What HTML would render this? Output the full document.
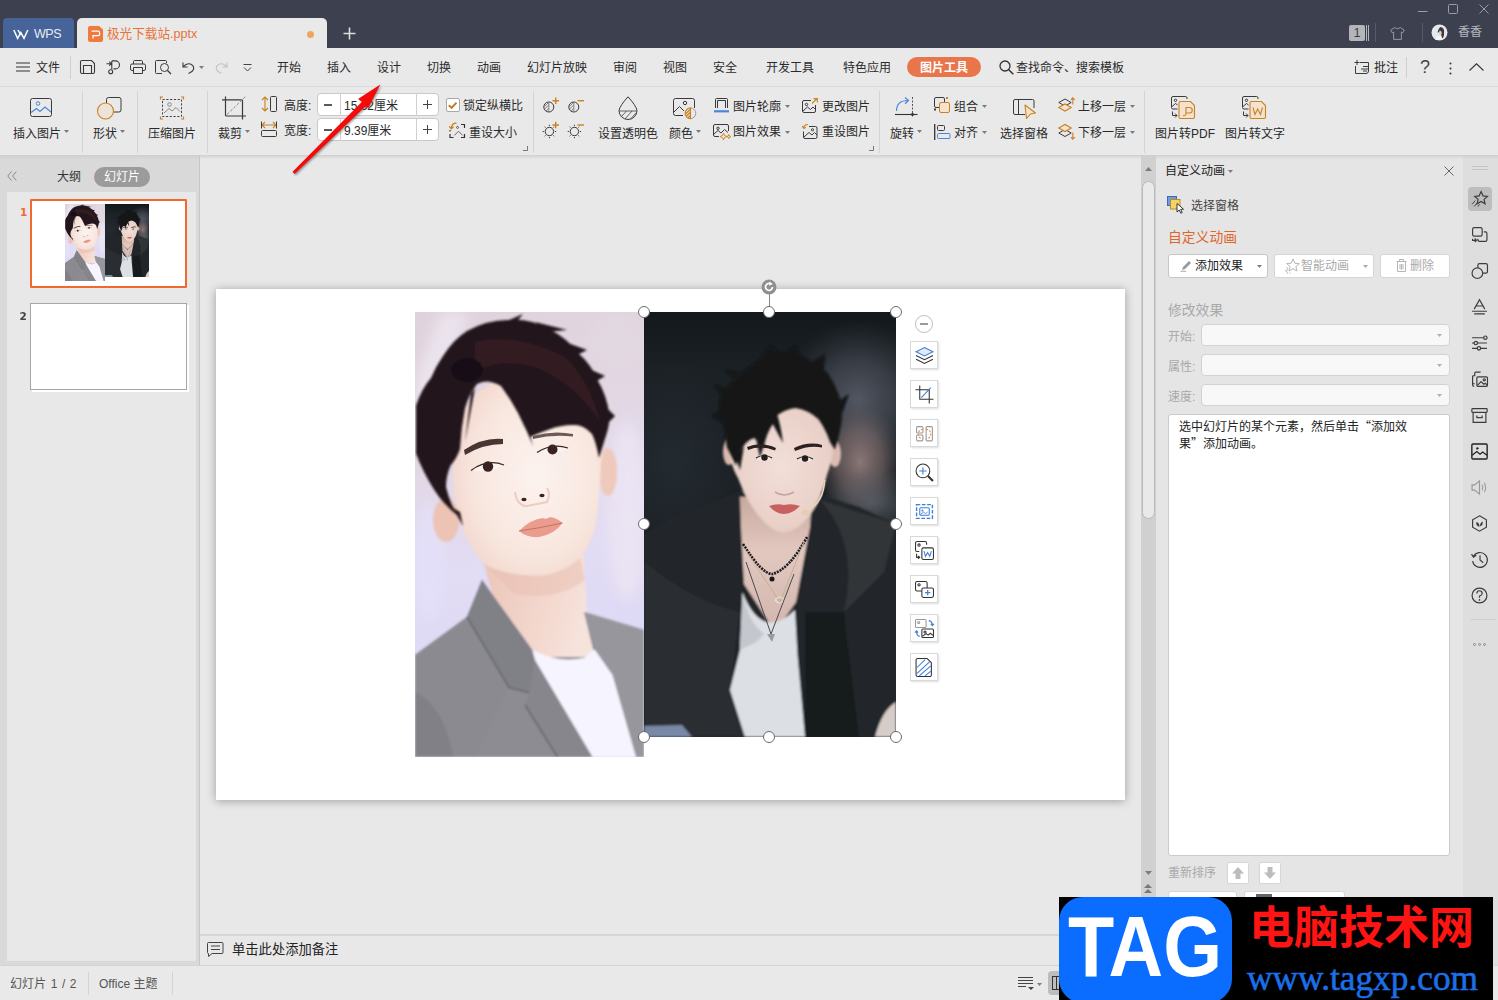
<!DOCTYPE html>
<html lang="zh-CN">
<head>
<meta charset="utf-8">
<title>极光下载站.pptx - WPS</title>
<style>
*{box-sizing:border-box;margin:0;padding:0}
html,body{width:1498px;height:1000px;overflow:hidden;background:#e8e8e8}
body{position:relative;font-family:"Liberation Sans","Noto Sans CJK SC",sans-serif;font-size:12px;color:#2b2b2b;line-height:1}
.abs{position:absolute}
.t{position:absolute;white-space:nowrap;line-height:16px;height:16px}
svg{position:absolute;overflow:visible}
svg.ph{overflow:hidden}
/* title bar */
#title{left:0;top:0;width:1498px;height:48px;background:#3d414f}
#wpstab{left:3px;top:18px;width:71px;height:30px;background:#46649a;border-radius:4px 4px 0 0}
#doctab{left:77px;top:18px;width:250px;height:31px;background:#e9e9e9;border-radius:5px 5px 0 0}
/* menubar */
#menu{left:0;top:48px;width:1498px;height:39px;background:#e9e9e9;border-bottom:1px solid #dcdcdc}
#menu .t{top:12px;font-size:12px;color:#2a2a2a}
/* ribbon */
#ribbon{left:0;top:87px;width:1498px;height:68px;background:#e9e9e9}
#rshadow{left:0;top:155px;width:1498px;height:4px;background:linear-gradient(#cfcfcf,rgba(215,215,215,0));z-index:3}
#ribbon .t{font-size:12px;color:#2a2a2a}
.vsep{position:absolute;width:1px;background:#d4d4d4}
.dd{position:absolute;width:5px;height:3px;background:#7c7c7c;clip-path:polygon(0 0,100% 0,50% 100%)}
/* left */
#left{left:0;top:155px;width:200px;height:811px;background:#d9d9d9;border-right:1px solid #c6c6c6}
#thumbs{left:7px;top:37px;width:189px;height:769px;background:#e8e8e8}
/* canvas */
#canvas{left:200px;top:155px;width:941px;height:780px;background:#e8e8e8}
#slide{left:216px;top:289px;width:909px;height:511px;background:#fff;box-shadow:0 1px 9px rgba(0,0,0,.32)}
/* right */
#vscroll{left:1141px;top:155px;width:15px;height:745px;background:#d0d0d0}
#rpane{left:1156px;top:155px;width:307px;height:745px;background:#e5e5e5}
#rstrip{left:1463px;top:155px;width:35px;height:845px;background:#dedede}
#notes{left:200px;top:934px;width:941px;height:32px;background:#e8e8e8;border-top:2px solid #d6d6d6}
#status{left:0;top:965px;width:1498px;height:35px;background:#e9e9e9;border-top:1px solid #d4d4d4}
</style>
</head>
<body>
<!-- TITLE -->
<div id="title" class="abs"></div>
<div id="wpstab" class="abs"></div>
<svg style="left:13px;top:29px" width="16" height="11" viewBox="0 0 16 11"><path d="M0.8 1 L4.6 9.4 L7.8 3.6 L11 9.400 L14.8 1 M5 1 L7.8 6" fill="none" stroke="#fff" stroke-width="1.5" stroke-linejoin="miter"/></svg>
<div class="t" style="left:34px;top:26px;color:#e6ebf5;font-size:12.500px;letter-spacing:-.5px">WPS</div>
<div id="doctab" class="abs"></div>
<svg style="left:88px;top:26px" width="15" height="16" viewBox="0 0 15 16"><path d="M2 0 H11 L15 3.5 V14 a2 2 0 0 1 -2 2 H2 a2 2 0 0 1 -2 -2 V2 a2 2 0 0 1 2 -2z" fill="#f07a3c"/><path d="M3.6 5.2 H10 a1.600 1.600 0 0 1 1.600 1.600 V8 a1.600 1.600 0 0 1 -1.600 1.600 H5 V12.500" fill="none" stroke="#fff" stroke-width="1.200"/></svg>
<div class="t" style="left:107px;top:26px;color:#e8733a;font-size:12.6px">极光下载站.pptx</div>
<div class="abs" style="left:307px;top:31px;width:7px;height:7px;border-radius:50%;background:#f2a45c"></div>
<svg style="left:343px;top:27px" width="13" height="13" viewBox="0 0 13 13"><path d="M6.5 0.5 V12.5 M0.5 6.5 H12.5" stroke="#dcdcdc" stroke-width="1.6" fill="none"/></svg>
<!-- window ctrls -->
<svg style="left:1418px;top:4px" width="72" height="10" viewBox="0 0 72 10"><path d="M0 7.5 H9.5" stroke="#9a9ca6" stroke-width="1" fill="none"/><rect x="30.5" y="0.5" width="9" height="9" rx="1" fill="none" stroke="#9a9ca6"/><path d="M61.5 0.5 L70.5 9.5 M70.5 0.5 L61.5 9.5" stroke="#9a9ca6" stroke-width="1" fill="none"/></svg>
<div class="abs" style="left:1349px;top:25px;width:16px;height:16px;background:#b4b5ba;border-radius:2px;color:#3a3a3a;font-size:12px;line-height:16px;text-align:center">1</div>
<div class="abs" style="left:1366px;top:25px;width:1px;height:16px;background:#b4b5ba"></div>
<div class="abs" style="left:1368px;top:25px;width:1px;height:16px;background:#b4b5ba"></div>
<div class="abs" style="left:1375px;top:23px;width:1px;height:19px;background:#555968"></div>
<svg style="left:1390px;top:27px" width="15" height="13" viewBox="0 0 15 13"><path d="M4.5 0.6 L0.7 3.2 L2.2 5.8 L3.6 5 V12.4 H11.4 V5 L12.8 5.8 L14.3 3.2 L10.5 0.6 Q7.5 3 4.5 0.6z" fill="none" stroke="#9697a0" stroke-width="1"/></svg>
<div class="abs" style="left:1422px;top:23px;width:1px;height:19px;background:#555968"></div>
<svg style="left:1431px;top:24px" width="17" height="17" viewBox="0 0 17 17"><circle cx="8.500" cy="8.500" r="8" fill="#e3e9ec"/><path d="M9.500 3 q3.800 .5 3.600 4.500 q.2 3 -.8 6 l-2 1.500 q.5 -4 -1 -6 q-1.200 -1 -2.800 -.5 q1 -4.500 3 -5.500z" fill="#3f3838"/><path d="M8.500 6.500 q1.800 0 2.200 2 q.2 1.800 -.8 2.700 q-1.600 -.2 -2 -2 z" fill="#e8cbbb"/><path d="M4 16 q1 -4 4.500 -4.500 l2 1 l1 3 z" fill="#f4f6f7"/></svg>
<div class="t" style="left:1458px;top:24px;color:#b6b7bd;font-size:12px">香香</div>
<!-- MENU -->
<div id="menu" class="abs">
<svg style="left:16px;top:14px" width="14" height="10" viewBox="0 0 14 10"><path d="M0 1 H14 M0 5 H14 M0 9 H14" stroke="#333" stroke-width="1.1" fill="none"/></svg>
<div class="t" style="left:36px">文件</div>
<div class="vsep" style="left:70px;top:8px;height:23px;background:#cfcfcf"></div>
<svg style="left:80px;top:12px" width="15" height="14" viewBox="0 0 15 14"><path d="M0.500 2 a1.500 1.500 0 0 1 1.500 -1.500 H11.500 L14.500 3.500 V12 a1.500 1.500 0 0 1 -1.500 1.500 H2 a1.500 1.500 0 0 1 -1.500 -1.500z M3.500 13.500 V5.500 H11.500 V13.500" fill="none" stroke="#3a3a3a" stroke-width="1.100"/></svg>
<svg style="left:106px;top:12px" width="15" height="15" viewBox="0 0 15 15"><path d="M0.500 3.700 H5 M3.300 1.700 L5.300 3.700 L3.300 5.700 M5.800 0.900 V9.500 M5.800 0.900 H9.500 a4 4 0 0 1 0 8 H7.500" fill="none" stroke="#3a3a3a" stroke-width="1.100"/><circle cx="4.700" cy="11.700" r="2" fill="none" stroke="#3a3a3a" stroke-width="1.100"/></svg>
<svg style="left:130px;top:12px" width="16" height="14" viewBox="0 0 16 14"><path d="M3.500 4 V1.500 a1 1 0 0 1 1 -1 H11.500 a1 1 0 0 1 1 1 V4 M3.500 10.500 H2 a1.500 1.500 0 0 1 -1.500 -1.500 V5.500 a1.500 1.500 0 0 1 1.500 -1.500 H14 a1.500 1.500 0 0 1 1.500 1.500 V9 a1.500 1.500 0 0 1 -1.500 1.500 H12.500 M3.500 7.500 H12.500 V13.500 H3.500z" fill="none" stroke="#3a3a3a" stroke-width="1"/></svg>
<svg style="left:155px;top:12px" width="17" height="15" viewBox="0 0 17 15"><path d="M7 13.500 H1.500 a1 1 0 0 1 -1 -1 V1.500 a1 1 0 0 1 1 -1 H10.500 a1 1 0 0 1 1 1 V3" fill="none" stroke="#3a3a3a"/><circle cx="9.500" cy="7.500" r="4" fill="none" stroke="#3a3a3a"/><path d="M12.500 10.500 L16 14" stroke="#3a3a3a" stroke-width="1.200"/></svg>
<svg style="left:182px;top:14px" width="13" height="12" viewBox="0 0 13 12"><path d="M1 0.500 V5 H5.500 M1.500 4.500 Q4.500 0.800 8.500 2 Q12.500 3.800 11.500 7.500 Q10.500 10 6.500 11.500" fill="none" stroke="#3a3a3a" stroke-width="1.100"/></svg>
<div class="dd" style="left:199px;top:18px"></div>
<svg style="left:215px;top:14px" width="13" height="12" viewBox="0 0 13 12"><path d="M12 0.500 V5 H7.500 M11.500 4.500 Q8.500 0.800 4.500 2 Q0.500 3.800 1.500 7.500 Q2.500 10 6.500 11.500" fill="none" stroke="#c2c2c2" stroke-width="1.100"/></svg>
<svg style="left:243px;top:16px" width="9" height="8" viewBox="0 0 9 8"><path d="M0.500 0.500 H8.500 M1 3.500 L4.500 7 L8 3.500" fill="none" stroke="#444" stroke-width="1"/></svg>
<div class="t" style="left:277px">开始</div>
<div class="t" style="left:327px">插入</div>
<div class="t" style="left:377px">设计</div>
<div class="t" style="left:427px">切换</div>
<div class="t" style="left:477px">动画</div>
<div class="t" style="left:527px">幻灯片放映</div>
<div class="t" style="left:613px">审阅</div>
<div class="t" style="left:663px">视图</div>
<div class="t" style="left:713px">安全</div>
<div class="t" style="left:766px">开发工具</div>
<div class="t" style="left:843px">特色应用</div>
<div class="abs" style="left:907px;top:9px;width:74px;height:20px;border-radius:10px;background:#e9764b"></div>
<div class="t" style="left:920px;color:#fff;font-weight:bold">图片工具</div>
<svg style="left:999px;top:12px" width="15" height="15" viewBox="0 0 15 15"><circle cx="6" cy="6" r="5" fill="none" stroke="#333" stroke-width="1.300"/><path d="M9.800 9.800 L14.300 14.300" stroke="#333" stroke-width="1.500"/></svg>
<div class="t" style="left:1016px">查找命令、搜索模板</div>
<svg style="left:1354px;top:12px" width="16" height="14" viewBox="0 0 16 14"><path d="M6 2.500 H14.500 V11 Q14.500 13.500 12 13.500 H1.500 V6 M9 6.500 H14 M7 9 H14 M9 11 H13" fill="none" stroke="#3a3a3a" stroke-width="1"/><path d="M3 0 V5 M0.500 2.500 H5.500" stroke="#3a3a3a" stroke-width="1" fill="none"/></svg>
<div class="t" style="left:1374px">批注</div>
<div class="vsep" style="left:1406px;top:9px;height:21px;background:#cfcfcf"></div>
<div class="t" style="left:1420px;top:9px;font-size:18px;height:20px;line-height:20px;color:#444">?</div>
<svg style="left:1449px;top:14px" width="3" height="13" viewBox="0 0 3 13"><circle cx="1.500" cy="1.500" r="1" fill="#333"/><circle cx="1.500" cy="6.500" r="1" fill="#333"/><circle cx="1.500" cy="11.500" r="1" fill="#333"/></svg>
<svg style="left:1469px;top:15px" width="15" height="8" viewBox="0 0 15 8"><path d="M0.500 7.500 L7.500 0.800 L14.500 7.500" fill="none" stroke="#333" stroke-width="1.100"/></svg>
</div>
<!-- RIBBON -->
<div id="ribbon" class="abs">
<svg style="left:30px;top:11px" width="22" height="19" viewBox="0 0 22 19"><rect x="0.500" y="0.500" width="21" height="18" rx="2" stroke="#3a3a3a" fill="none" stroke-width="1"/><circle cx="8" cy="5.500" r="1.800" fill="none" stroke="#4a86d8"/><path d="M1 14.500 L6.500 10.500 L10 13.500 L15 9 L21 14" fill="none" stroke="#4a86d8" stroke-width="1.100"/></svg>
<div class="t" style="left:13px;top:39px;">插入图片</div>
<div class="dd" style="left:64px;top:43px"></div>
<div class="vsep" style="left:82px;top:4px;height:62px"></div>
<svg style="left:97px;top:10px" width="25" height="23" viewBox="0 0 25 23"><rect x="9.500" y="0.500" width="14.500" height="14.500" rx="2" stroke="#3a3a3a" fill="none" stroke-width="1" fill="#e9e9e9"/><circle cx="8.500" cy="14" r="8" fill="#ede3d8" stroke="#cb8120" stroke-width="1.100"/></svg>
<div class="t" style="left:93px;top:39px;">形状</div>
<div class="dd" style="left:120px;top:43px"></div>
<div class="vsep" style="left:137px;top:4px;height:62px"></div>
<svg style="left:160px;top:9px" width="24" height="23" viewBox="0 0 24 23"><rect x="2.500" y="3.500" width="19" height="17" fill="none" stroke="#444" stroke-dasharray="2.200 1.600"/><circle cx="9.500" cy="8.500" r="1.800" fill="none" stroke="#888"/><path d="M4 17 L9 12.500 L12 15 L16 11.500 L20 15.500" fill="none" stroke="#888"/><path d="M0.500 3.500 V1 H3 M21 1 H23.500 V3.500 M23.500 20.500 V23 H21 M3 23 H0.500 V20.500" fill="none" stroke="#cb8120" stroke-width="1.200"/></svg>
<div class="t" style="left:148px;top:39px;">压缩图片</div>
<div class="vsep" style="left:207px;top:4px;height:62px"></div>
<svg style="left:222px;top:9px" width="25" height="24" viewBox="0 0 25 24"><path d="M3.500 0.400 V19 a1 1 0 0 0 1 1 H24 M0 3.800 H19.500 a1 1 0 0 1 1 1 V23.600" stroke="#3a3a3a" fill="none" stroke-width="1.200"/><path d="M5 18.500 L24 0" stroke="#8a8a8a" stroke-dasharray="3 1.500" fill="none"/></svg>
<div class="t" style="left:218px;top:39px;">裁剪</div>
<div class="dd" style="left:245px;top:43px"></div>
<svg style="left:261px;top:9px" width="17" height="16" viewBox="0 0 17 16"><rect x="9.500" y="0.500" width="6" height="15" rx="1" stroke="#3a3a3a" fill="none" stroke-width="1"/><path d="M4 1 V15 M1 4 L4 1 L7 4 M1 12 L4 15 L7 12" fill="none" stroke="#cb8120" stroke-width="1.100"/></svg>
<svg style="left:261px;top:34px" width="17" height="17" viewBox="0 0 17 17"><rect x="0.500" y="9.500" width="15" height="6" rx="1" stroke="#3a3a3a" fill="none" stroke-width="1"/><path d="M1 4 H15 M4 1 L1 4 L4 7 M12 1 L15 4 L12 7" fill="none" stroke="#cb8120" stroke-width="1.100"/><path d="M0.500 0.500 V7.500 M15.500 0.500 V7.500" stroke="#3a3a3a" fill="none"/></svg>
<div class="t" style="left:284px;top:11px;">高度:</div>
<div class="t" style="left:284px;top:36px;">宽度:</div>
<div class="abs" style="left:317px;top:6px;width:122px;height:23px;background:#fff;border:1px solid #c9c9c9;border-radius:4px"></div>
<div class="abs" style="left:340px;top:6px;width:1px;height:23px;background:#d0d0d0"></div><div class="abs" style="left:416px;top:6px;width:1px;height:23px;background:#d0d0d0"></div>
<div class="abs" style="left:324px;top:17px;width:8px;height:2px;background:#5a5a5a"></div>
<svg style="left:423px;top:13px" width="9" height="9" viewBox="0 0 9 9"><path d="M4.500 0 V9 M0 4.500 H9" stroke="#444" fill="none"/></svg>
<div class="t" style="left:344px;top:11px;">15.62厘米</div>
<div class="abs" style="left:317px;top:31px;width:122px;height:23px;background:#fff;border:1px solid #c9c9c9;border-radius:4px"></div>
<div class="abs" style="left:340px;top:31px;width:1px;height:23px;background:#d0d0d0"></div><div class="abs" style="left:416px;top:31px;width:1px;height:23px;background:#d0d0d0"></div>
<div class="abs" style="left:324px;top:42px;width:8px;height:2px;background:#5a5a5a"></div>
<svg style="left:423px;top:38px" width="9" height="9" viewBox="0 0 9 9"><path d="M4.500 0 V9 M0 4.500 H9" stroke="#444" fill="none"/></svg>
<div class="t" style="left:344px;top:36px;">9.39厘米</div>
<div class="abs" style="left:446px;top:11px;width:14px;height:14px;background:#fff;border:1px solid #a8a8a8;border-radius:2px"></div>
<svg style="left:448px;top:15px" width="9" height="7" viewBox="0 0 9 7"><path d="M0.800 3.300 L3.600 6 L8.500 0.600" fill="none" stroke="#c47a1c" stroke-width="1.900"/></svg>
<div class="t" style="left:463px;top:11px;">锁定纵横比</div>
<svg style="left:449px;top:35px" width="16" height="16" viewBox="0 0 16 16"><path d="M12 2.500 H15.500 V6 M15.500 12 V15.500 H12 M4.500 15.500 H1 V12 M1 9.500 V8" stroke="#333" stroke-width="1.200" fill="none"/><circle cx="8.500" cy="5.400" r="1" fill="none" stroke="#555" stroke-width="0.900"/><path d="M5.400 13.400 L9.500 9.200 L13.700 13.400" stroke="#666" fill="none"/><path d="M7.500 1.200 Q2.500 1 2.300 6.500 M0.300 4.300 L2.300 6.800 L4.600 4.600" fill="none" stroke="#cb8120" stroke-width="1.300"/></svg>
<div class="t" style="left:469px;top:37.500px;">重设大小</div>
<svg style="left:523px;top:59px" width="5" height="5" viewBox="0 0 5 5"><path d="M4.500 0 V4.500 H0" stroke="#777" fill="none"/></svg>
<div class="vsep" style="left:533px;top:4px;height:62px"></div>
<svg style="left:543px;top:11px" width="16" height="15" viewBox="0 0 16 15"><circle cx="5.800" cy="9" r="5" stroke="#3a3a3a" fill="none" stroke-width="1"/><path d="M5.800 4 V14 M1.500 8.500 L5.500 4.500 M1.200 11.500 L5.500 7.200 M3 13 L5.500 10.500" stroke="#777" stroke-width="0.900" fill="none"/><path d="M9.500 2.700 H16 M12.700 -0.500 V6" stroke="#cb8120" stroke-width="1.400" fill="none"/></svg>
<svg style="left:568px;top:11px" width="16" height="15" viewBox="0 0 16 15"><circle cx="5.800" cy="9" r="5" stroke="#3a3a3a" fill="none" stroke-width="1"/><path d="M5.800 4 V14 M1.500 8.500 L5.500 4.500 M1.200 11.500 L5.500 7.200 M3 13 L5.500 10.500" stroke="#777" stroke-width="0.900" fill="none"/><path d="M9.500 2.700 H16" stroke="#cb8120" stroke-width="1.400" fill="none"/></svg>
<svg style="left:543px;top:35px" width="16" height="17" viewBox="0 0 16 17"><circle cx="6.400" cy="9.500" r="4.200" stroke="#3a3a3a" fill="none" stroke-width="1"/><path d="M6.400 2.800 V4 M6.400 15 V16.200 M-0.300 9.500 H0.900 M11.900 9.500 H13.100 M1.600 4.700 L2.500 5.600 M10.300 13.400 L11.200 14.300 M1.600 14.300 L2.500 13.400 M10.300 5.600 L11.200 4.700" stroke="#3a3a3a" fill="none"/><path d="M9.500 3 H16 M12.700 -0.200 V6.300" stroke="#cb8120" stroke-width="1.400" fill="none"/></svg>
<svg style="left:568px;top:35px" width="16" height="17" viewBox="0 0 16 17"><circle cx="6.400" cy="9.500" r="4.200" stroke="#3a3a3a" fill="none" stroke-width="1"/><path d="M6.400 2.800 V4 M6.400 15 V16.200 M-0.300 9.500 H0.900 M11.900 9.500 H13.100 M1.600 4.700 L2.500 5.600 M10.300 13.400 L11.200 14.300 M1.600 14.300 L2.500 13.400 M10.300 5.600 L11.200 4.700" stroke="#3a3a3a" fill="none"/><path d="M9.500 3 H16" stroke="#cb8120" stroke-width="1.400" fill="none"/></svg>
<svg style="left:618px;top:9px" width="20" height="24" viewBox="0 0 20 24"><path d="M10 0.800 Q2 9.500 1 14.500 A9 9 0 0 0 19 14.500 Q18 9.500 10 0.800z" stroke="#3a3a3a" fill="none" stroke-width="1" stroke-width="1.100"/><path d="M1 15 H19 M3 21 L8.500 15 M7 23 L14 15 M12.500 23 L18.500 16.500" stroke="#555" stroke-width="0.900" fill="none"/></svg>
<div class="t" style="left:598px;top:39px;">设置透明色</div>
<svg style="left:673px;top:11px" width="23" height="21" viewBox="0 0 23 21"><path d="M21.500 10 V2.500 a2 2 0 0 0 -2 -2 H2.500 a2 2 0 0 0 -2 2 V15.500 a2 2 0 0 0 2 2 H10" stroke="#3a3a3a" fill="none" stroke-width="1"/><circle cx="12" cy="5" r="1.700" stroke="#3a3a3a" fill="none" stroke-width="1"/><path d="M1 14 L6.500 8.500 L11 13" stroke="#3a3a3a" fill="none" stroke-width="1"/><circle cx="17.500" cy="15.300" r="5.300" fill="#e9e9e9" stroke="#999" stroke-width="1"/><path d="M17.500 10 A5.300 5.300 0 0 0 17.500 20.600z" fill="#e9e9e9" stroke="#cb8120" stroke-width="1.100"/><path d="M13 15.500 L17 11.500 M13.200 18.300 L17.300 14.200 M15 19.800 L17.300 17.500" stroke="#cb8120" stroke-width="1.300" fill="none"/></svg>
<div class="t" style="left:669px;top:39px;">颜色</div>
<div class="dd" style="left:696px;top:43px"></div>
<svg style="left:714px;top:11px" width="15" height="15" viewBox="0 0 15 15"><path d="M1.500 10 V1.500 a1 1 0 0 1 1 -1 H12.500 a1 1 0 0 1 1 1 V10 M3.500 10 V2.500 H11.500 V10" stroke="#3a3a3a" fill="none" stroke-width="1"/><path d="M0 13.300 H15" stroke="#4a86d8" stroke-width="2.200"/></svg>
<div class="t" style="left:733px;top:12px;">图片轮廓</div>
<div class="dd" style="left:785px;top:18px"></div>
<svg style="left:713px;top:37px" width="18" height="16" viewBox="0 0 18 16"><path d="M15.500 7 V2 a1.500 1.500 0 0 0 -1.500 -1.500 H2 a1.500 1.500 0 0 0 -1.500 1.500 V11 a1.500 1.500 0 0 0 1.500 1.500 H6" stroke="#3a3a3a" fill="none" stroke-width="1"/><circle cx="5" cy="4.300" r="1.200" stroke="#3a3a3a" fill="none" stroke-width="1"/><path d="M1 10 L5 6.500 L8 9 L11.500 5.500 L15 8.500" stroke="#3a3a3a" fill="none" stroke-width="1"/><path d="M10.500 9 L11.500 11.500 L14 12.500 L11.500 13.500 L10.500 16 L9.500 13.500 L7 12.500 L9.500 11.500z M15.800 10.500 L16.400 12 L17.800 12.600 L16.400 13.200 L15.800 14.600 L15.200 13.200 L13.800 12.600 L15.200 12z" fill="none" stroke="#cb8120" stroke-width="0.900"/></svg>
<div class="t" style="left:733px;top:37px;">图片效果</div>
<div class="dd" style="left:785px;top:44px"></div>
<svg style="left:802px;top:11px" width="16" height="15" viewBox="0 0 16 15"><path d="M9 2.500 H2 a1.500 1.500 0 0 0 -1.500 1.500 V13 a1.500 1.500 0 0 0 1.500 1.500 H12 a1.500 1.500 0 0 0 1.500 -1.500 V7" stroke="#3a3a3a" fill="none" stroke-width="1"/><circle cx="4.500" cy="6.500" r="1.200" stroke="#3a3a3a" fill="none" stroke-width="1"/><path d="M1 13 L5.500 9 L8.500 11.500 L11 9 L13.500 11.500" stroke="#3a3a3a" fill="none" stroke-width="1"/><path d="M10 5.500 L15 0.700 M11.500 0.600 H15.300 V4.500" fill="none" stroke="#cb8120" stroke-width="1.100"/></svg>
<div class="t" style="left:822px;top:12px;">更改图片</div>
<svg style="left:802px;top:36px" width="16" height="16" viewBox="0 0 16 16"><path d="M7 3.500 H13.500 a1.500 1.500 0 0 1 1.500 1.500 V14 a1.500 1.500 0 0 1 -1.500 1.500 H3 a1.500 1.500 0 0 1 -1.500 -1.500 V8.500" stroke="#3a3a3a" fill="none" stroke-width="1"/><path d="M2 14 L7 9.500 L10 12 L12.500 9.500 L15 12" stroke="#3a3a3a" fill="none" stroke-width="1"/><circle cx="10.500" cy="6.800" r="1.100" stroke="#3a3a3a" fill="none" stroke-width="1"/><path d="M1.500 5.500 Q2 1.500 6 1.500 M1.500 5.500 L0.300 3 M1.500 5.500 L4 4.500" fill="none" stroke="#cb8120" stroke-width="1.100"/></svg>
<div class="t" style="left:822px;top:37px;">重设图片</div>
<svg style="left:869px;top:59px" width="5" height="5" viewBox="0 0 5 5"><path d="M4.500 0 V4.500 H0" stroke="#777" fill="none"/></svg>
<div class="vsep" style="left:879px;top:4px;height:62px"></div>
<svg style="left:895px;top:10px" width="23" height="21" viewBox="0 0 23 21"><path d="M1.500 14 Q1.500 3.500 13 3.500 M10 0.500 L13.500 3.500 L10 6.800" fill="none" stroke="#4a86d8" stroke-width="1.200"/><path d="M17.500 0 V20" stroke="#555" stroke-dasharray="2 1.500" fill="none"/><path d="M0 17.500 H22.500" stroke="#333" stroke-width="1.100" fill="none"/><circle cx="17.500" cy="17.500" r="1.400" fill="#333"/></svg>
<div class="t" style="left:890px;top:39px;">旋转</div>
<div class="dd" style="left:917px;top:43px"></div>
<svg style="left:934px;top:10px" width="16" height="16" viewBox="0 0 16 16"><rect x="0.500" y="0.500" width="10" height="10" rx="1.500" stroke="#3a3a3a" fill="none" stroke-width="1"/><rect x="5.500" y="5.500" width="10" height="10" rx="1.500" fill="#f3e2cd" stroke="#cb8120"/><rect x="0" y="11.500" width="2" height="2" fill="#3a3a3a"/><rect x="12" y="0" width="2" height="2" fill="#cb8120"/></svg>
<div class="t" style="left:954px;top:12px;">组合</div>
<div class="dd" style="left:982px;top:18px"></div>
<svg style="left:934px;top:37px" width="17" height="16" viewBox="0 0 17 16"><path d="M0.700 0 V16" stroke="#333" stroke-width="1.300"/><rect x="3.500" y="1.500" width="7" height="5" rx="1" stroke="#3a3a3a" fill="none" stroke-width="1"/><rect x="3.500" y="9.500" width="12.500" height="5" rx="1" fill="none" stroke="#4a86d8"/></svg>
<div class="t" style="left:954px;top:37.500px;">对齐</div>
<div class="dd" style="left:982px;top:44px"></div>
<svg style="left:1013px;top:12px" width="24" height="21" viewBox="0 0 24 21"><path d="M12 15.500 H2 a1.500 1.500 0 0 1 -1.500 -1.500 V2 a1.500 1.500 0 0 1 1.500 -1.500 H19.500 a1.500 1.500 0 0 1 1.500 1.500 V9 M5.500 0.500 V15.500" stroke="#3a3a3a" fill="none" stroke-width="1"/><path d="M12 6 L22.500 14 L17.500 15 L13.500 19.500z" fill="#f3e2cd" stroke="#cb8120" stroke-width="1.100" stroke-linejoin="round"/></svg>
<div class="t" style="left:1000px;top:39px;">选择窗格</div>
<svg style="left:1058px;top:10px" width="17" height="17" viewBox="0 0 17 17"><path d="M0.800 5.500 L7 2 L13.200 5.500 L7 9z" stroke="#3a3a3a" fill="none" stroke-width="1"/><path d="M0.800 10.500 L7 7 L13.200 10.500 L7 14z" fill="#f0e4d4" stroke="#cb8120" stroke-width="1.100"/><path d="M14.800 7.500 V0.800 M12.800 2.800 L14.800 0.800 L16.800 2.800" fill="none" stroke="#cb8120" stroke-width="1.100"/></svg>
<div class="t" style="left:1078px;top:12px;">上移一层</div>
<div class="dd" style="left:1130px;top:18px"></div>
<svg style="left:1058px;top:36px" width="17" height="17" viewBox="0 0 17 17"><path d="M0.800 10 L7 6.500 L13.200 10 L7 13.500z" stroke="#3a3a3a" fill="none" stroke-width="1"/><path d="M0.800 5 L7 1.500 L13.200 5 L7 8.500z" fill="#f0e4d4" stroke="#cb8120" stroke-width="1.100"/><path d="M14.800 9.500 V16.200 M12.800 14.200 L14.800 16.200 L16.800 14.200" fill="none" stroke="#cb8120" stroke-width="1.100"/></svg>
<div class="t" style="left:1078px;top:37.500px;">下移一层</div>
<div class="dd" style="left:1130px;top:44px"></div>
<div class="vsep" style="left:1144px;top:4px;height:62px"></div>
<svg style="left:1171px;top:9px" width="25" height="24" viewBox="0 0 25 24"><path d="M16 3 V2 a1.500 1.500 0 0 0 -1.500 -1.500 H2 a1.500 1.500 0 0 0 -1.500 1.500 V11.500 a1.500 1.500 0 0 0 1.500 1.500 H6.500" stroke="#3a3a3a" fill="none" stroke-width="1"/><circle cx="4.500" cy="4.300" r="1.200" stroke="#3a3a3a" fill="none" stroke-width="1"/><path d="M1 10.500 L4.500 7.500 L6.500 9" stroke="#3a3a3a" fill="none" stroke-width="1"/><path d="M9.500 5.500 H19.500 L23.500 9.500 V21 a1.500 1.500 0 0 1 -1.500 1.500 H9.500 a1.500 1.500 0 0 1 -1.500 -1.500 V7 a1.500 1.500 0 0 1 1.500 -1.500z" fill="#f3e2cd" stroke="#cb8120" stroke-width="1.100"/><path d="M12 19.500 Q15 20.500 15 17 H18.500 a2.700 2.700 0 0 0 0 -5.500 H15 V17" fill="none" stroke="#cb8120" stroke-width="1.100"/><path d="M1.500 15.500 V19.500 H6 M4 17.500 L6 19.500 L4 21.500" stroke="#3a3a3a" fill="none" stroke-width="1"/></svg>
<div class="t" style="left:1155px;top:39px;">图片转PDF</div>
<svg style="left:1242px;top:9px" width="25" height="24" viewBox="0 0 25 24"><path d="M16 3 V2 a1.500 1.500 0 0 0 -1.500 -1.500 H2 a1.500 1.500 0 0 0 -1.500 1.500 V11.500 a1.500 1.500 0 0 0 1.500 1.500 H6.500" stroke="#3a3a3a" fill="none" stroke-width="1"/><circle cx="4.500" cy="4.300" r="1.200" stroke="#3a3a3a" fill="none" stroke-width="1"/><path d="M1 10.500 L4.500 7.500 L6.500 9" stroke="#3a3a3a" fill="none" stroke-width="1"/><path d="M9.500 5.500 H19.500 L23.500 9.500 V21 a1.500 1.500 0 0 1 -1.500 1.500 H9.500 a1.500 1.500 0 0 1 -1.500 -1.500 V7 a1.500 1.500 0 0 1 1.500 -1.500z" fill="#f3e2cd" stroke="#cb8120" stroke-width="1.100"/><path d="M11 11.500 L13 18.500 L15.700 13 L18.500 18.500 L20.500 11.500" fill="none" stroke="#cb8120" stroke-width="1.100"/><path d="M1.500 15.500 V19.500 H6 M4 17.500 L6 19.500 L4 21.500" stroke="#3a3a3a" fill="none" stroke-width="1"/></svg>
<div class="t" style="left:1225px;top:39px;">图片转文字</div>
</div>
<div id="rshadow" class="abs"></div>
<!-- LEFT -->
<div id="left" class="abs"><div id="thumbs" class="abs"></div></div>
<!-- CANVAS -->
<div id="canvas" class="abs"></div>
<div id="slide" class="abs"></div>
<!-- RIGHT -->
<div id="vscroll" class="abs"></div>
<div id="rpane" class="abs"></div>
<div id="rstrip" class="abs"></div>
<div id="notes" class="abs"></div>
<div id="status" class="abs"></div>
<!-- WATERMARK -->
<!-- ARROW -->
<!-- S:photos -->
<svg width="0" height="0" style="left:0;top:0"><defs>
<filter id="b05" x="-5%" y="-5%" width="110%" height="110%"><feGaussianBlur stdDeviation="0.5"/></filter>
<filter id="b1" x="-5%" y="-5%" width="110%" height="110%"><feGaussianBlur stdDeviation="1.1"/></filter>
<filter id="b6" x="-30%" y="-30%" width="160%" height="160%"><feGaussianBlur stdDeviation="7"/></filter>
<filter id="b10" x="-40%" y="-40%" width="180%" height="180%"><feGaussianBlur stdDeviation="11"/></filter>
<linearGradient id="p1bg" x1="0" y1="0" x2="0.150" y2="1"><stop offset="0" stop-color="#dfd2dc"/><stop offset=".3" stop-color="#e2d7e2"/><stop offset=".6" stop-color="#e2dcf4"/><stop offset="1" stop-color="#dbd7f6"/></linearGradient>
<radialGradient id="p1face" cx=".55" cy=".5" r=".68"><stop offset="0" stop-color="#fcf3ef"/><stop offset=".6" stop-color="#f8e6de"/><stop offset="1" stop-color="#efd0c4"/></radialGradient>
<linearGradient id="p1neck" x1="0" y1="0" x2="1" y2=".3"><stop offset="0" stop-color="#eac3b6"/><stop offset=".6" stop-color="#f3d6cc"/><stop offset="1" stop-color="#f6e3dc"/></linearGradient>
<radialGradient id="p2face" cx=".5" cy=".5" r=".65"><stop offset="0" stop-color="#f2dfd8"/><stop offset=".7" stop-color="#e9d0c8"/><stop offset="1" stop-color="#d6b6ac"/></radialGradient>
<linearGradient id="p2neck" x1="0" y1="0" x2="0" y2="1"><stop offset="0" stop-color="#c9a99f"/><stop offset=".4" stop-color="#e2c8bf"/><stop offset="1" stop-color="#d2b6ae"/></linearGradient>
<linearGradient id="p2top" x1="0" y1="0" x2="0" y2="1"><stop offset="0" stop-color="#13181b"/><stop offset="1" stop-color="#13181b" stop-opacity="0"/></linearGradient>
<radialGradient id="p2g1"><stop offset="0" stop-color="#555a65" stop-opacity=".95"/><stop offset=".5" stop-color="#4a4f5a" stop-opacity=".6"/><stop offset="1" stop-color="#3a3f48" stop-opacity="0"/></radialGradient>
<radialGradient id="p2g2"><stop offset="0" stop-color="#96807f" stop-opacity=".9"/><stop offset=".55" stop-color="#86706f" stop-opacity=".55"/><stop offset="1" stop-color="#6a5a5e" stop-opacity="0"/></radialGradient>
<radialGradient id="p2g3"><stop offset="0" stop-color="#252c33" stop-opacity=".8"/><stop offset="1" stop-color="#252c33" stop-opacity="0"/></radialGradient>
<radialGradient id="p2g4"><stop offset="0" stop-color="#5d6169" stop-opacity=".8"/><stop offset="1" stop-color="#5d6169" stop-opacity="0"/></radialGradient>
</defs></svg>
<svg class="ph" style="left:415px;top:312px" width="229" height="445" viewBox="0 0 229 445"><rect width="229" height="445" fill="url(#p1bg)"/><g filter="url(#b6)"><path d="M25 0 L55 0 L15 110 L0 140 L0 70z" fill="#ece6f0" opacity=".9"/><ellipse cx="212" cy="200" rx="20" ry="90" fill="#ece4f3" opacity=".9"/><ellipse cx="14" cy="250" rx="16" ry="60" fill="#e4e0f9" opacity=".9"/><ellipse cx="200" cy="30" rx="30" ry="30" fill="#e2d8e2" opacity=".8"/></g><g filter="url(#b1)"><ellipse cx="193" cy="160" rx="9" ry="24" fill="#efc9bb"/><ellipse cx="31" cy="208" rx="13" ry="22" fill="#ecc3b4"/><path d="M66 240 L168 232 L172 300 L182 340 L150 352 L112 342 L78 285z" fill="url(#p1neck)"/><path d="M0 343 L52 305 L67 268 L120 345 L180 345 L169 300 L229 318 L229 445 L0 445z" fill="#8c8c92"/><path d="M169 300 L229 318 L229 445 L221 445 L197 363 L180 338z" fill="#96969c"/><path d="M0 343 L52 305 L94 375 L60 445 L0 445z" fill="#8a8a90"/><path d="M0 380 Q30 395 38 445 L0 445z" fill="#808086"/><path d="M52 305 L67 268 L117.500 338 L120 348 L114 380.500 L94 375.500z" fill="#808087"/><path d="M114 380.500 L110 393 L142.500 445 L178 445 L120 348z" fill="#86868c"/><path d="M110 393 L142.500 445 M52 305 L94 375.500 L114 380.500" stroke="#65656c" stroke-width="1.500" fill="none"/><path d="M117.500 338 Q145 352 170 345.500 L177.500 338 L180 338 L197.500 363 L221 445 L177.500 445 L120 348z" fill="#f6f4fe"/><path d="M72 254 Q100 266 130 263 Q150 260 165 246 L170 268 Q140 290 98 282z" fill="#e8bdb0" opacity=".5"/><path d="M40 120 Q34 170 44 205 Q52 235 72 254 Q100 266 130 263 Q150 260 165 246 Q176 232 180 216 Q184 195 186 150 Q190 120 188 100 Q150 55 90 65 Q50 80 40 120z" fill="url(#p1face)"/></g><g filter="url(#b1)"><path d="M93 8 Q115 6 134 17 Q152 26 163 41 Q176 52 182 67 Q192 84 194 101 Q195 112 191.500 122 L184 146 Q181 130 177 122 Q168 112 158 113 Q145 113 134 117.500 Q124 121 115 125 Q108 112 103 101 Q95 86 86 74 Q72 66 62 72 Q54 82 50 96 Q46 116 45 137 Q42 146 35.500 153.500 Q31 164 31 175 Q35 192 43 204 Q28 192 19 177.500 Q8 160 1 141.500 L1 93.500 Q7 76 16 66 Q21 54 28 44 Q38 28 52 19 Q72 8 93 8z" fill="#24161a"/><path d="M60 30 Q100 20 150 45 Q175 70 185 110 Q160 70 120 55 Q85 45 60 60z" fill="#3a2226" opacity=".7"/><ellipse cx="52" cy="58" rx="16" ry="12" fill="#171015"/><path d="M85 12 L108 2 L100 12z M120 10 L152 18 L132 20z M150 30 L172 38 L160 44z M172 56 L190 64 L180 70z M186 90 L200 104 L192 112z M30 52 L20 62 L36 62z M45 200 L48 214 L38 196z M104 100 L118 134 L110 104z M60 76 L50 130 L56 82z" fill="#24161a"/></g><g filter="url(#b05)"><path d="M49 138 Q68 125 88 127 L88 132 Q68 132 50 143z" fill="#4a3432"/><path d="M118 124 Q138 118 158 122 L158 124.500 Q138 122 118 127z" fill="#4a3432" opacity=".8"/><path d="M57 158 Q72 147 88 153 Q74 162 57 158z" fill="#fbf3f0"/><circle cx="73" cy="154.500" r="5.200" fill="#3a2220"/><path d="M56 158.500 Q72 146.500 89 153" stroke="#3a2622" stroke-width="1.300" fill="none"/><path d="M123 140 Q137 131 152 137 Q138 144 123 140z" fill="#fbf3f0"/><circle cx="137.500" cy="137.500" r="5" fill="#3a2220"/><path d="M122 140.500 Q137 130.500 153 136" stroke="#3a2622" stroke-width="1.300" fill="none"/><ellipse cx="109" cy="187.500" rx="2.600" ry="1.800" fill="#3a2222"/><ellipse cx="127" cy="183.500" rx="2.600" ry="1.800" fill="#3a2222"/><path d="M100 180 Q102 194 112 194 Q122 192 132 190 Q136 182 132 176" fill="none" stroke="#e5bfb2" stroke-width="2" opacity=".7"/><path d="M104 219 Q116 207 128 206 Q131 208 135 205 Q142 206 147.500 211 Q140 222 124 225 Q112 226 104 219z" fill="#ea9d8e"/><path d="M104 219 Q125 216 147.500 211" stroke="#c9705f" stroke-width="1" fill="none"/></g></svg>
<svg class="ph" style="left:644px;top:312px" width="252" height="425" viewBox="0 0 252 425"><rect width="252" height="425" fill="#1b2125"/><rect width="252" height="60" fill="url(#p2top)"/><ellipse cx="214" cy="88" rx="75" ry="80" fill="url(#p2g1)"/><ellipse cx="30" cy="150" rx="70" ry="100" fill="url(#p2g3)"/><ellipse cx="216" cy="150" rx="42" ry="58" fill="url(#p2g2)"/><ellipse cx="228" cy="190" rx="50" ry="34" fill="url(#p2g4)"/><g filter="url(#b1)"><path d="M0 222 L30 205 L61 193 L100 178 L176 183 L215 195 L252 212 L252 425 L0 425z" fill="#24282a"/><path d="M0 250 Q50 290 95 300 L86 378 L101 425 L0 425z" fill="#2a2e30"/><path d="M176 188 Q215 230 200 300 L240 260 L252 212z" fill="#303437"/><path d="M161 300 L200 300 L215 425 L161 425z" fill="#181c1e"/><path d="M0 414 L38 413 L48 425 L0 425z" fill="#7888a6"/><path d="M252 390 Q238 398 231 425 L252 425z" fill="#d6ccc8"/><path d="M96 185 L168 185 L166 215 L152 290 L131 320 L100 272 L97 215z" fill="url(#p2neck)"/><path d="M98.500 280.500 Q118 330 151 298 L153.500 343 L161 425 L101 425 L86 378 L96 338z" fill="#dcdfe4"/><path d="M98.500 280.500 Q104 310 120 322 L112 330 L96 338z" fill="#c4c8ce"/><ellipse cx="85" cy="140" rx="6" ry="13" fill="#d9b8ae"/><ellipse cx="191" cy="142" rx="6" ry="13" fill="#dcbcb2"/><path d="M84 120 Q84 150 94 166 Q102 188 114 203 Q128 220 140 221 Q154 219 166 203 Q178 186 183 163 Q192 140 190 110 Q160 80 120 90 Q92 98 84 120z" fill="url(#p2face)"/></g><g filter="url(#b1)"><path d="M133.400 39.700 Q118 44 105.800 54.700 Q92 64 82.800 75.400 Q76 83 74.700 91.500 Q75 105 80.500 116.800 L82.800 135 L92 153.600 Q94 143 98.900 135 Q103 128 110.400 126 L119.600 136 Q122 122 128.800 112 L139 131 Q137 115 133.400 103 Q142 97 151.800 96 Q165 98 174.800 107.600 Q182 118 186.300 130.600 L190.900 137.500 Q196 122 197.800 107.600 Q198 95 195.500 84.600 Q191 72 184 61.600 Q174 51 161 45.500 Q147 39 133.400 39.700z" fill="#121518"/><path d="M116 46 L126 33 L136 41z M140 41 L152 34 L156 44z M168 50 L181 42 L180 58z M84 78 L70 72 L80 88z M77 98 L67 104 L78 110z M196 88 L205 82 L198 102z M90 66 L80 58 L96 60z M100 134 L96 158 L92 146z M112 126 L116 146 L120 132z" fill="#121518"/></g><g filter="url(#b05)"><path d="M103 135 Q117 129 132 136 L131 138.500 Q117 133 104 138z" fill="#2a2020"/><path d="M150 136 Q165 129 178 133 L178 135.500 Q165 133 151 139z" fill="#2a2020"/><ellipse cx="120" cy="146" rx="7" ry="3.200" fill="#f2e6e2"/><circle cx="120.500" cy="145.500" r="3.200" fill="#241a1a"/><path d="M112 146 Q120 141 128 146" stroke="#2a1e1e" stroke-width="1.200" fill="none"/><ellipse cx="161" cy="147" rx="7" ry="3.200" fill="#f2e6e2"/><circle cx="161" cy="146.500" r="3.200" fill="#241a1a"/><path d="M153 147 Q161 142 169 147" stroke="#2a1e1e" stroke-width="1.200" fill="none"/><path d="M131 180 Q140 186 150 180" stroke="#c9a59c" stroke-width="1.600" fill="none"/><path d="M125 194 Q133 191 140 193 Q148 191 156 194 Q148 202 140 202 Q132 202 125 194z" fill="#c8605e"/><path d="M180.500 168 Q180 190 163 199" stroke="#e8d5bd" stroke-width="1.600" fill="none"/><ellipse cx="161.500" cy="200.500" rx="3.500" ry="3" fill="#e6cdb0"/><path d="M99 232 Q118 262 128 262 Q145 258 163 225" stroke="#1d1d22" stroke-width="2.600" fill="none" stroke-dasharray="2 1"/><circle cx="128" cy="267" r="2.500" fill="#15151a"/><path d="M100 236 L136 290 L160 230" stroke="#bfae90" stroke-width="0.900" fill="none"/><path d="M131 288 q5 -6 9 0 q-4 6 -9 0z" fill="none" stroke="#e5e0d5" stroke-width="1.200"/><path d="M102 250 L127 322 L150 262" stroke="#4a4a52" stroke-width="1" fill="none"/><path d="M123 322 L131 322 L128 330z" fill="#9a9aa2"/></g></svg>

<!-- E:photos -->
<!-- S:overlay -->
<div class="abs" style="left:769px;top:293px;width:1px;height:19px;background:#888"></div>
<svg style="left:761px;top:279px" width="16" height="16" viewBox="0 0 16 16"><circle cx="8" cy="8" r="7.500" fill="#8f8f8f"/><path d="M11.500 8 A3.500 3.500 0 1 1 9.500 4.800" fill="none" stroke="#fff" stroke-width="1.700"/><path d="M8.500 2.500 L11.800 5 L8.200 6.800z" fill="#fff"/></svg>
<div class="abs" style="left:638px;top:306px;width:12px;height:12px;border-radius:50%;background:#fff;border:1px solid #6a6a6a"></div>
<div class="abs" style="left:763px;top:306px;width:12px;height:12px;border-radius:50%;background:#fff;border:1px solid #6a6a6a"></div>
<div class="abs" style="left:890px;top:306px;width:12px;height:12px;border-radius:50%;background:#fff;border:1px solid #6a6a6a"></div>
<div class="abs" style="left:638px;top:518px;width:12px;height:12px;border-radius:50%;background:#fff;border:1px solid #6a6a6a"></div>
<div class="abs" style="left:890px;top:518px;width:12px;height:12px;border-radius:50%;background:#fff;border:1px solid #6a6a6a"></div>
<div class="abs" style="left:638px;top:731px;width:12px;height:12px;border-radius:50%;background:#fff;border:1px solid #6a6a6a"></div>
<div class="abs" style="left:763px;top:731px;width:12px;height:12px;border-radius:50%;background:#fff;border:1px solid #6a6a6a"></div>
<div class="abs" style="left:890px;top:731px;width:12px;height:12px;border-radius:50%;background:#fff;border:1px solid #6a6a6a"></div>
<div class="abs" style="left:915px;top:315px;width:18px;height:18px;border-radius:50%;background:#fff;border:1px solid #bdbdbd"></div><div class="abs" style="left:920px;top:323px;width:8px;height:2px;background:#9a9a9a"></div>
<div class="abs" style="left:910px;top:341px;width:28px;height:28px;background:#fff;border:1px solid #d9d9d9;box-shadow:1px 1px 2px rgba(0,0,0,.14)"></div><svg style="left:915px;top:346px" width="19" height="19" viewBox="0 0 18 18"><path d="M9 1.500 L17 5.500 L9 9.500 L1 5.500z" fill="#dfeafa" stroke="#3f7fd6"/><path d="M1 9 L9 13 L17 9 M1 12.500 L9 16.500 L17 12.500" stroke="#333" fill="none" stroke-width="1"/></svg>
<div class="abs" style="left:910px;top:380px;width:28px;height:28px;background:#fff;border:1px solid #d9d9d9;box-shadow:1px 1px 2px rgba(0,0,0,.14)"></div><svg style="left:915px;top:385px" width="19" height="19" viewBox="0 0 18 18"><path d="M4.500 0.500 V13.500 H17.500 M0.500 4.500 H13.500 V17.500" stroke="#333" fill="none" stroke-width="1" stroke-width="1.300"/><path d="M6 12 L15 2.500" stroke="#3f7fd6" fill="none"/></svg>
<div class="abs" style="left:910px;top:419px;width:28px;height:28px;background:#fff;border:1px solid #d9d9d9;box-shadow:1px 1px 2px rgba(0,0,0,.14)"></div><svg style="left:915px;top:424px" width="19" height="19" viewBox="0 0 18 18"><rect x="1.500" y="2.500" width="6" height="6" rx="1" fill="none" stroke="#999"/><rect x="1.500" y="10.500" width="6" height="5.500" rx="1" fill="none" stroke="#999"/><rect x="10.500" y="2.500" width="6" height="13.500" rx="1" fill="none" stroke="#999"/><path d="M7.500 5 A4.500 4.500 0 0 0 7.500 14 M10.500 5 A4.500 4.500 0 0 1 10.500 14" fill="none" stroke="#e08a4a" stroke-dasharray="2 1.200"/></svg>
<div class="abs" style="left:910px;top:458px;width:28px;height:28px;background:#fff;border:1px solid #d9d9d9;box-shadow:1px 1px 2px rgba(0,0,0,.14)"></div><svg style="left:915px;top:463px" width="19" height="19" viewBox="0 0 18 18"><circle cx="7.500" cy="7.500" r="6.500" stroke="#333" fill="none" stroke-width="1" stroke-width="1.200"/><path d="M12.300 12.300 L17 17" stroke="#333" stroke-width="2"/><path d="M7.500 4 V11 M4 7.500 H11" stroke="#3f7fd6" fill="none"/></svg>
<div class="abs" style="left:910px;top:497px;width:28px;height:28px;background:#fff;border:1px solid #d9d9d9;box-shadow:1px 1px 2px rgba(0,0,0,.14)"></div><svg style="left:915px;top:502px" width="19" height="19" viewBox="0 0 18 18"><rect x="1.500" y="2.500" width="15" height="13" fill="none" stroke="#3f7fd6" stroke-width="1.300" stroke-dasharray="3.500 1.500"/><rect x="4.500" y="5.500" width="9" height="7" rx="1" fill="none" stroke="#3f7fd6"/><circle cx="7" cy="8" r="0.900" fill="#3f7fd6"/><path d="M5 12 L8 9.500 L10 11 L12 9.500" fill="none" stroke="#3f7fd6" stroke-width="0.800"/></svg>
<div class="abs" style="left:910px;top:536px;width:28px;height:28px;background:#fff;border:1px solid #d9d9d9;box-shadow:1px 1px 2px rgba(0,0,0,.14)"></div><svg style="left:915px;top:541px" width="19" height="19" viewBox="0 0 18 18"><path d="M11 3.500 V2 a1.500 1.500 0 0 0 -1.500 -1.500 H2 a1.500 1.500 0 0 0 -1.500 1.500 V8.500 a1.500 1.500 0 0 0 1.500 1.500 H4" stroke="#333" fill="none" stroke-width="1"/><circle cx="3.800" cy="3.800" r="1.100" stroke="#333" fill="none" stroke-width="1"/><rect x="6.500" y="6.500" width="11" height="11" rx="1.500" fill="#fff" stroke="#333"/><path d="M8.500 9.500 L10 14.500 L12 11 L14 14.500 L15.500 9.500" fill="none" stroke="#3f7fd6"/><path d="M1.500 12 V15.500 H4.500 M3 14 L4.500 15.500 L3 17" stroke="#333" fill="none" stroke-width="1"/></svg>
<div class="abs" style="left:910px;top:575px;width:28px;height:28px;background:#fff;border:1px solid #d9d9d9;box-shadow:1px 1px 2px rgba(0,0,0,.14)"></div><svg style="left:915px;top:580px" width="19" height="19" viewBox="0 0 18 18"><rect x="0.500" y="1.500" width="11" height="9" rx="1.500" stroke="#333" fill="none" stroke-width="1"/><circle cx="3.800" cy="4.600" r="1.100" stroke="#333" fill="none" stroke-width="1"/><rect x="6.500" y="7.500" width="11" height="9" rx="1.500" fill="#fff" stroke="#333"/><path d="M12 9.500 V14.500 M9.500 12 H14.500" stroke="#3f7fd6" fill="none" stroke-width="1.200"/></svg>
<div class="abs" style="left:910px;top:614px;width:28px;height:28px;background:#fff;border:1px solid #d9d9d9;box-shadow:1px 1px 2px rgba(0,0,0,.14)"></div><svg style="left:915px;top:619px" width="19" height="19" viewBox="0 0 18 18"><rect x="0.500" y="0.500" width="10" height="7.500" rx="1" fill="none" stroke="#999"/><circle cx="3.500" cy="3.300" r="1" fill="none" stroke="#999"/><rect x="6.500" y="9.500" width="11" height="8" rx="1" fill="#fff" stroke="#333"/><circle cx="9.500" cy="12.300" r="1" stroke="#333" fill="none" stroke-width="1"/><path d="M7 16.500 L10.500 13.800 L12.500 15.300 L14.500 13.500 L17 15.500" stroke="#333" fill="none" stroke-width="1"/><path d="M13 1.500 Q16.500 2 16.500 6 M15 4.500 L16.500 6.300 L18 4.500 M4.500 16.500 Q1.500 16 1.500 11.500 M0 13 L1.500 11.200 L3 13" fill="none" stroke="#3f7fd6" stroke-width="1.100"/></svg>
<div class="abs" style="left:910px;top:653px;width:28px;height:28px;background:#fff;border:1px solid #d9d9d9;box-shadow:1px 1px 2px rgba(0,0,0,.14)"></div><svg style="left:915px;top:658px" width="19" height="19" viewBox="0 0 18 18"><path d="M2.500 0.500 H11.500 L15.500 4.500 V16 a1.500 1.500 0 0 1 -1.500 1.500 H2.500 a1.500 1.500 0 0 1 -1.500 -1.500 V2 a1.500 1.500 0 0 1 1.500 -1.500z" stroke="#333" fill="none" stroke-width="1" stroke-width="1.200"/><path d="M2 9 L9.500 1.500 M2 14.500 L14 3.500 M4 17 L15 7.500 M9.500 17 L15 12.500" stroke="#3f7fd6" fill="none"/></svg>

<!-- E:overlay -->
<!-- S:leftc -->
<svg style="left:7px;top:171px" width="10" height="10" viewBox="0 0 10 10"><path d="M4.500 0.500 L0.800 5 L4.500 9.500 M9.300 0.500 L5.600 5 L9.300 9.500" fill="none" stroke="#8a8a8a" stroke-width="1"/></svg>
<div class="t" style="left:57px;top:169px;font-size:12px;color:#333">大纲</div>
<div class="abs" style="left:94px;top:167px;width:56px;height:20px;border-radius:10px;background:#9b9b9b"></div><div class="t" style="left:104px;top:169px;font-size:12px;color:#fff">幻灯片</div>
<div class="abs" style="left:30px;top:199px;width:157px;height:89px;background:#fff;border:2px solid #f06a2f;border-radius:1px"></div>
<div class="t" style="left:20px;top:204px;font-family:'DejaVu Sans',sans-serif;font-weight:bold;font-size:10.500px;color:#f06a2f">1</div>
<svg class="ph" style="left:65px;top:204px" width="40" height="77" viewBox="0 0 229 445" preserveAspectRatio="none"><rect width="229" height="445" fill="url(#p1bg)"/><g filter="url(#b6)"><path d="M25 0 L55 0 L15 110 L0 140 L0 70z" fill="#ece6f0" opacity=".9"/><ellipse cx="212" cy="200" rx="20" ry="90" fill="#ece4f3" opacity=".9"/><ellipse cx="14" cy="250" rx="16" ry="60" fill="#e4e0f9" opacity=".9"/><ellipse cx="200" cy="30" rx="30" ry="30" fill="#e2d8e2" opacity=".8"/></g><g filter="url(#b1)"><ellipse cx="193" cy="160" rx="9" ry="24" fill="#efc9bb"/><ellipse cx="31" cy="208" rx="13" ry="22" fill="#ecc3b4"/><path d="M66 240 L168 232 L172 300 L182 340 L150 352 L112 342 L78 285z" fill="url(#p1neck)"/><path d="M0 343 L52 305 L67 268 L120 345 L180 345 L169 300 L229 318 L229 445 L0 445z" fill="#8c8c92"/><path d="M169 300 L229 318 L229 445 L221 445 L197 363 L180 338z" fill="#96969c"/><path d="M0 343 L52 305 L94 375 L60 445 L0 445z" fill="#8a8a90"/><path d="M0 380 Q30 395 38 445 L0 445z" fill="#808086"/><path d="M52 305 L67 268 L117.500 338 L120 348 L114 380.500 L94 375.500z" fill="#808087"/><path d="M114 380.500 L110 393 L142.500 445 L178 445 L120 348z" fill="#86868c"/><path d="M110 393 L142.500 445 M52 305 L94 375.500 L114 380.500" stroke="#65656c" stroke-width="1.500" fill="none"/><path d="M117.500 338 Q145 352 170 345.500 L177.500 338 L180 338 L197.500 363 L221 445 L177.500 445 L120 348z" fill="#f6f4fe"/><path d="M72 254 Q100 266 130 263 Q150 260 165 246 L170 268 Q140 290 98 282z" fill="#e8bdb0" opacity=".5"/><path d="M40 120 Q34 170 44 205 Q52 235 72 254 Q100 266 130 263 Q150 260 165 246 Q176 232 180 216 Q184 195 186 150 Q190 120 188 100 Q150 55 90 65 Q50 80 40 120z" fill="url(#p1face)"/></g><g filter="url(#b1)"><path d="M93 8 Q115 6 134 17 Q152 26 163 41 Q176 52 182 67 Q192 84 194 101 Q195 112 191.500 122 L184 146 Q181 130 177 122 Q168 112 158 113 Q145 113 134 117.500 Q124 121 115 125 Q108 112 103 101 Q95 86 86 74 Q72 66 62 72 Q54 82 50 96 Q46 116 45 137 Q42 146 35.500 153.500 Q31 164 31 175 Q35 192 43 204 Q28 192 19 177.500 Q8 160 1 141.500 L1 93.500 Q7 76 16 66 Q21 54 28 44 Q38 28 52 19 Q72 8 93 8z" fill="#24161a"/><path d="M60 30 Q100 20 150 45 Q175 70 185 110 Q160 70 120 55 Q85 45 60 60z" fill="#3a2226" opacity=".7"/><ellipse cx="52" cy="58" rx="16" ry="12" fill="#171015"/><path d="M85 12 L108 2 L100 12z M120 10 L152 18 L132 20z M150 30 L172 38 L160 44z M172 56 L190 64 L180 70z M186 90 L200 104 L192 112z M30 52 L20 62 L36 62z M45 200 L48 214 L38 196z M104 100 L118 134 L110 104z M60 76 L50 130 L56 82z" fill="#24161a"/></g><g filter="url(#b05)"><path d="M49 138 Q68 125 88 127 L88 132 Q68 132 50 143z" fill="#4a3432"/><path d="M118 124 Q138 118 158 122 L158 124.500 Q138 122 118 127z" fill="#4a3432" opacity=".8"/><path d="M57 158 Q72 147 88 153 Q74 162 57 158z" fill="#fbf3f0"/><circle cx="73" cy="154.500" r="5.200" fill="#3a2220"/><path d="M56 158.500 Q72 146.500 89 153" stroke="#3a2622" stroke-width="1.300" fill="none"/><path d="M123 140 Q137 131 152 137 Q138 144 123 140z" fill="#fbf3f0"/><circle cx="137.500" cy="137.500" r="5" fill="#3a2220"/><path d="M122 140.500 Q137 130.500 153 136" stroke="#3a2622" stroke-width="1.300" fill="none"/><ellipse cx="109" cy="187.500" rx="2.600" ry="1.800" fill="#3a2222"/><ellipse cx="127" cy="183.500" rx="2.600" ry="1.800" fill="#3a2222"/><path d="M100 180 Q102 194 112 194 Q122 192 132 190 Q136 182 132 176" fill="none" stroke="#e5bfb2" stroke-width="2" opacity=".7"/><path d="M104 219 Q116 207 128 206 Q131 208 135 205 Q142 206 147.500 211 Q140 222 124 225 Q112 226 104 219z" fill="#ea9d8e"/><path d="M104 219 Q125 216 147.500 211" stroke="#c9705f" stroke-width="1" fill="none"/></g></svg>
<svg class="ph" style="left:105px;top:204px" width="44" height="73" viewBox="0 0 252 425" preserveAspectRatio="none"><rect width="252" height="425" fill="#1b2125"/><rect width="252" height="60" fill="url(#p2top)"/><ellipse cx="214" cy="88" rx="75" ry="80" fill="url(#p2g1)"/><ellipse cx="30" cy="150" rx="70" ry="100" fill="url(#p2g3)"/><ellipse cx="216" cy="150" rx="42" ry="58" fill="url(#p2g2)"/><ellipse cx="228" cy="190" rx="50" ry="34" fill="url(#p2g4)"/><g filter="url(#b1)"><path d="M0 222 L30 205 L61 193 L100 178 L176 183 L215 195 L252 212 L252 425 L0 425z" fill="#24282a"/><path d="M0 250 Q50 290 95 300 L86 378 L101 425 L0 425z" fill="#2a2e30"/><path d="M176 188 Q215 230 200 300 L240 260 L252 212z" fill="#303437"/><path d="M161 300 L200 300 L215 425 L161 425z" fill="#181c1e"/><path d="M0 414 L38 413 L48 425 L0 425z" fill="#7888a6"/><path d="M252 390 Q238 398 231 425 L252 425z" fill="#d6ccc8"/><path d="M96 185 L168 185 L166 215 L152 290 L131 320 L100 272 L97 215z" fill="url(#p2neck)"/><path d="M98.500 280.500 Q118 330 151 298 L153.500 343 L161 425 L101 425 L86 378 L96 338z" fill="#dcdfe4"/><path d="M98.500 280.500 Q104 310 120 322 L112 330 L96 338z" fill="#c4c8ce"/><ellipse cx="85" cy="140" rx="6" ry="13" fill="#d9b8ae"/><ellipse cx="191" cy="142" rx="6" ry="13" fill="#dcbcb2"/><path d="M84 120 Q84 150 94 166 Q102 188 114 203 Q128 220 140 221 Q154 219 166 203 Q178 186 183 163 Q192 140 190 110 Q160 80 120 90 Q92 98 84 120z" fill="url(#p2face)"/></g><g filter="url(#b1)"><path d="M133.400 39.700 Q118 44 105.800 54.700 Q92 64 82.800 75.400 Q76 83 74.700 91.500 Q75 105 80.500 116.800 L82.800 135 L92 153.600 Q94 143 98.900 135 Q103 128 110.400 126 L119.600 136 Q122 122 128.800 112 L139 131 Q137 115 133.400 103 Q142 97 151.800 96 Q165 98 174.800 107.600 Q182 118 186.300 130.600 L190.900 137.500 Q196 122 197.800 107.600 Q198 95 195.500 84.600 Q191 72 184 61.600 Q174 51 161 45.500 Q147 39 133.400 39.700z" fill="#121518"/><path d="M116 46 L126 33 L136 41z M140 41 L152 34 L156 44z M168 50 L181 42 L180 58z M84 78 L70 72 L80 88z M77 98 L67 104 L78 110z M196 88 L205 82 L198 102z M90 66 L80 58 L96 60z M100 134 L96 158 L92 146z M112 126 L116 146 L120 132z" fill="#121518"/></g><g filter="url(#b05)"><path d="M103 135 Q117 129 132 136 L131 138.500 Q117 133 104 138z" fill="#2a2020"/><path d="M150 136 Q165 129 178 133 L178 135.500 Q165 133 151 139z" fill="#2a2020"/><ellipse cx="120" cy="146" rx="7" ry="3.200" fill="#f2e6e2"/><circle cx="120.500" cy="145.500" r="3.200" fill="#241a1a"/><path d="M112 146 Q120 141 128 146" stroke="#2a1e1e" stroke-width="1.200" fill="none"/><ellipse cx="161" cy="147" rx="7" ry="3.200" fill="#f2e6e2"/><circle cx="161" cy="146.500" r="3.200" fill="#241a1a"/><path d="M153 147 Q161 142 169 147" stroke="#2a1e1e" stroke-width="1.200" fill="none"/><path d="M131 180 Q140 186 150 180" stroke="#c9a59c" stroke-width="1.600" fill="none"/><path d="M125 194 Q133 191 140 193 Q148 191 156 194 Q148 202 140 202 Q132 202 125 194z" fill="#c8605e"/><path d="M180.500 168 Q180 190 163 199" stroke="#e8d5bd" stroke-width="1.600" fill="none"/><ellipse cx="161.500" cy="200.500" rx="3.500" ry="3" fill="#e6cdb0"/><path d="M99 232 Q118 262 128 262 Q145 258 163 225" stroke="#1d1d22" stroke-width="2.600" fill="none" stroke-dasharray="2 1"/><circle cx="128" cy="267" r="2.500" fill="#15151a"/><path d="M100 236 L136 290 L160 230" stroke="#bfae90" stroke-width="0.900" fill="none"/><path d="M131 288 q5 -6 9 0 q-4 6 -9 0z" fill="none" stroke="#e5e0d5" stroke-width="1.200"/><path d="M102 250 L127 322 L150 262" stroke="#4a4a52" stroke-width="1" fill="none"/><path d="M123 322 L131 322 L128 330z" fill="#9a9aa2"/></g></svg>
<div class="abs" style="left:30px;top:303px;width:157px;height:87px;background:#fff;border:1px solid #a6a6a6;box-shadow:2px 2px 0 #fff"></div>
<div class="t" style="left:19.500px;top:308px;font-family:'DejaVu Sans',sans-serif;font-weight:bold;font-size:10.500px;color:#444">2</div>

<!-- E:leftc -->
<!-- S:rpanec -->
<div class="abs" style="left:1142px;top:181px;width:13px;height:338px;background:#e9e9e9;border:1px solid #b9b9b9;border-radius:7px"></div>
<div class="dd" style="left:1145px;top:167px;width:7px;height:4px;clip-path:polygon(0 100%,100% 100%,50% 0)"></div>
<div class="dd" style="left:1145px;top:871px;width:7px;height:4px"></div>
<svg style="left:1144px;top:884px" width="8" height="10" viewBox="0 0 8 10"><path d="M4 0 L8 4 H0z M4 5 L8 9 H0z" fill="#777"/></svg>
<div class="t" style="left:1165px;top:163px;font-size:12px;color:#222">自定义动画</div><div class="dd" style="left:1228px;top:170px"></div>
<svg style="left:1444px;top:166px" width="10" height="10" viewBox="0 0 10 10"><path d="M0.500 0.500 L9.500 9.500 M9.500 0.500 L0.500 9.500" stroke="#666" fill="none"/></svg>
<svg style="left:1167px;top:196px" width="18" height="18" viewBox="0 0 18 18"><rect x="0.500" y="0.500" width="9" height="9" fill="#6f9be0" stroke="#3d69b8"/><rect x="3.500" y="3.500" width="9.500" height="9.500" fill="#f6d36a" stroke="#b98d1a"/><path d="M10 7.500 L10 16 L12.200 14 L13.800 17.200 L15.200 16.500 L13.700 13.400 L16.500 13.200z" fill="#fff" stroke="#222" stroke-width="0.900"/></svg>
<div class="t" style="left:1191px;top:197.500px;font-size:12px;color:#444">选择窗格</div>
<div class="t" style="left:1168px;top:230px;font-size:13.800px;color:#df652c">自定义动画</div>
<div class="abs" style="left:1168px;top:254px;width:100px;height:24px;background:#fff;border:1px solid #c6c6c6;border-radius:3px"></div>
<svg style="left:1180px;top:260px" width="12" height="12" viewBox="0 0 12 12"><path d="M2 10 L3 7 L9 1 L11 3 L5 9z" fill="#9a9a9a"/><path d="M0.500 11.300 H6" stroke="#b5b5b5" stroke-width="1.200"/></svg>
<div class="t" style="left:1195px;top:258px;font-size:12px;color:#222">添加效果</div><div class="dd" style="left:1257px;top:265px"></div>
<div class="abs" style="left:1274px;top:254px;width:100px;height:24px;background:#fff;border:1px solid #d6d6d6;border-radius:3px"></div>
<svg style="left:1284px;top:258px" width="16" height="16" viewBox="0 0 16 16"><path d="M9 1 L10.800 5.200 L15.300 5.600 L11.900 8.600 L12.900 13 L9 10.700 L5.100 13 L6.100 8.600 L2.700 5.600 L7.200 5.200z" fill="none" stroke="#b5b5b5"/><path d="M3 9 L4 12 L1 12.500 L3.500 14 L3 16 M5 14.500 L6.500 15.500" stroke="#c0c0c0" fill="none" stroke-width="0.900"/></svg>
<div class="t" style="left:1301px;top:258px;font-size:12px;color:#a9a9a9">智能动画</div><div class="dd" style="left:1363px;top:265px;background:#aaa"></div>
<div class="abs" style="left:1380px;top:254px;width:70px;height:24px;background:#fff;border:1px solid #d6d6d6;border-radius:3px"></div>
<svg style="left:1396px;top:259px" width="11" height="13" viewBox="0 0 11 13"><path d="M0.500 2.500 H10.500 M3.500 2.500 V0.500 H7.500 V2.500 M1.500 2.500 V12.500 H9.500 V2.500 M4 5 V10.500 M5.500 5 V10.500 M7 5 V10.500" fill="none" stroke="#b5b5b5"/></svg>
<div class="t" style="left:1410px;top:258px;font-size:12px;color:#a9a9a9">删除</div>
<div class="t" style="left:1168px;top:303px;font-size:13.800px;color:#a9a9a9">修改效果</div>
<div class="t" style="left:1168px;top:329px;font-size:12px;color:#a9a9a9">开始:</div><div class="abs" style="left:1201px;top:324px;width:249px;height:22px;background:#f8f8f8;border:1px solid #d3d3d3;border-radius:4px"></div><div class="dd" style="left:1437px;top:334px;background:#b0b0b0"></div>
<div class="t" style="left:1168px;top:359px;font-size:12px;color:#a9a9a9">属性:</div><div class="abs" style="left:1201px;top:354px;width:249px;height:22px;background:#f8f8f8;border:1px solid #d3d3d3;border-radius:4px"></div><div class="dd" style="left:1437px;top:364px;background:#b0b0b0"></div>
<div class="t" style="left:1168px;top:389px;font-size:12px;color:#a9a9a9">速度:</div><div class="abs" style="left:1201px;top:384px;width:249px;height:22px;background:#f8f8f8;border:1px solid #d3d3d3;border-radius:4px"></div><div class="dd" style="left:1437px;top:394px;background:#b0b0b0"></div>
<div class="abs" style="left:1168px;top:414px;width:282px;height:442px;background:#fff;border:1px solid #cbcbcb;border-radius:3px"></div>
<div class="abs" style="left:1179px;top:418px;width:240px;font-size:12px;line-height:16px;color:#222;letter-spacing:0">选中幻灯片的某个元素，然后单击<span style="font-family:'Noto Sans CJK SC','Liberation Sans',sans-serif">“</span>添加效<br>果<span style="font-family:'Noto Sans CJK SC','Liberation Sans',sans-serif">”</span>添加动画。</div>
<div class="t" style="left:1168px;top:865px;font-size:12px;color:#a9a9a9">重新排序</div>
<div class="abs" style="left:1227px;top:862px;width:22px;height:22px;background:#fff;border:1px solid #d6d6d6;border-radius:2px"></div><svg style="left:1231px;top:866px" width="14" height="14" viewBox="0 0 14 14"><path d="M7 1 L13 7.500 H9.500 V13 H4.500 V7.500 H1z" fill="#bdbdbd"/></svg>
<div class="abs" style="left:1259px;top:862px;width:22px;height:22px;background:#fff;border:1px solid #d6d6d6;border-radius:2px"></div><svg style="left:1263px;top:866px" width="14" height="14" viewBox="0 0 14 14"><path d="M7 13 L13 6.500 H9.500 V1 H4.500 V6.500 H1z" fill="#bdbdbd"/></svg>
<div class="abs" style="left:1168px;top:891px;width:69px;height:12px;background:#fff;border:1px solid #d6d6d6;border-radius:3px"></div><div class="abs" style="left:1244px;top:891px;width:101px;height:12px;background:#fff;border:1px solid #d6d6d6;border-radius:3px"></div><div class="abs" style="left:1256px;top:894px;width:16px;height:6px;background:#666"></div>

<!-- E:rpanec -->
<!-- S:rstripc -->
<div class="abs" style="left:1472px;top:166px;width:16px;height:1px;background:#c2c2c2"></div><div class="abs" style="left:1472px;top:169px;width:16px;height:1px;background:#c2c2c2"></div>
<div class="abs" style="left:1468px;top:187px;width:24px;height:24px;border-radius:4px;background:#bdbdbd"></div>
<svg style="left:1471px;top:190px" width="17" height="17" viewBox="0 0 16 16"><path d="M9.500 1.500 L11.300 5.500 L15.500 6 L12.300 8.800 L13.200 13 L9.500 10.800 L5.800 13 L6.700 8.800 L3.500 6 L7.700 5.500z" stroke="#3c3c3c" fill="none" stroke-width="1.1"/><path d="M1 13.500 L4 10 M3 15.500 L6 12 M6.500 15.500 L8 13.500" stroke="#3c3c3c" stroke-width="0.900" fill="none"/></svg>
<svg style="left:1471px;top:226px" width="17" height="17" viewBox="0 0 16 16"><rect x="1.500" y="1.500" width="9" height="8" rx="1.500" stroke="#3c3c3c" fill="none" stroke-width="1.1"/><path d="M12 5.500 H13.500 a1.500 1.500 0 0 1 1.500 1.500 V13 a1.500 1.500 0 0 1 -1.500 1.500 H8 a1.500 1.500 0 0 1 -1.500 -1.500 V12 M1.500 12 V13.500 H5 M3.500 11.800 L5.200 13.500 L3.500 15.200" stroke="#3c3c3c" fill="none" stroke-width="1.1"/></svg>
<svg style="left:1471px;top:262px" width="17" height="17" viewBox="0 0 16 16"><rect x="6.500" y="1.500" width="9" height="9" rx="1.500" stroke="#3c3c3c" fill="none" stroke-width="1.1"/><circle cx="6" cy="10.500" r="5" fill="#dcdcdc" stroke="#3c3c3c" stroke-width="1.100"/></svg>
<svg style="left:1471px;top:298px" width="17" height="17" viewBox="0 0 16 16"><path d="M3 10.500 L8 1.500 L13 10.500 M5 7.500 H11 M1 12.500 H15 M3 15 H13" stroke="#3c3c3c" fill="none" stroke-width="1.1"/></svg>
<svg style="left:1471px;top:334px" width="17" height="17" viewBox="0 0 16 16"><path d="M1 3.500 H12 M1 8.500 H3 M6 8.500 H15 M1 13.500 H6 M9 13.500 H15" stroke="#3c3c3c" fill="none" stroke-width="1.1"/><circle cx="13.500" cy="3.500" r="1.600" stroke="#3c3c3c" fill="none" stroke-width="1.1"/><circle cx="4.500" cy="8.500" r="1.600" stroke="#3c3c3c" fill="none" stroke-width="1.1"/><circle cx="7.500" cy="13.500" r="1.600" stroke="#3c3c3c" fill="none" stroke-width="1.1"/></svg>
<svg style="left:1471px;top:371px" width="17" height="17" viewBox="0 0 16 16"><path d="M3.500 4 V2 a1 1 0 0 1 1 -1 H9 M1.500 4.500 H4 M1.500 4.500 V13 a1.500 1.500 0 0 0 1.500 1.500 M1.500 12 H3.500" stroke="#3c3c3c" fill="none" stroke-width="1.1"/><rect x="5.500" y="5.500" width="10" height="9" rx="1" stroke="#3c3c3c" fill="none" stroke-width="1.1"/><circle cx="12.500" cy="8.300" r="1" stroke="#3c3c3c" fill="none" stroke-width="1.1"/><path d="M6 13.500 L9.500 10 L12 12.500 L13.500 11.500 L15.500 13.500" stroke="#3c3c3c" fill="none" stroke-width="1.1"/></svg>
<svg style="left:1471px;top:407px" width="17" height="17" viewBox="0 0 16 16"><rect x="0.800" y="1.500" width="14.400" height="3.500" rx="0.800" stroke="#3c3c3c" fill="none" stroke-width="1.1"/><path d="M2 5 V14.500 H14 V5 M5.500 8 V10 H10.500 V8" stroke="#3c3c3c" fill="none" stroke-width="1.1"/></svg>
<svg style="left:1471px;top:443px" width="17" height="17" viewBox="0 0 16 16"><rect x="0.800" y="1" width="14.400" height="14" rx="1" stroke="#222" fill="none" stroke-width="1.300"/><circle cx="6" cy="5" r="1.100" fill="#222"/><path d="M1 11.500 L5.500 8 L8.500 10.500 L11 8.500 L15 11.500" stroke="#222" fill="none" stroke-width="1.200"/></svg>
<svg style="left:1471px;top:479px" width="17" height="17" viewBox="0 0 16 16"><path d="M1 5.500 H3.500 L8 1.800 V14.200 L3.500 10.500 H1z" fill="none" stroke="#999" stroke-width="1.100"/><path d="M10.500 5.500 Q12 8 10.500 10.500 M12.500 3.500 Q15 8 12.500 12.500" stroke="#999" fill="none"/></svg>
<svg style="left:1471px;top:515px" width="17" height="17" viewBox="0 0 16 16"><path d="M8 0.800 L14.500 4.500 V11.500 L8 15.200 L1.500 11.500 V4.500z" stroke="#3c3c3c" fill="none" stroke-width="1.1"/><path d="M8 11.500 V8 M8 11 Q4.500 10.500 5 6.500 Q8 7 8 11 M8.500 10.500 Q11.500 10 11 6 Q8.500 7 8.500 10.500" fill="#3c3c3c" stroke="none"/></svg>
<svg style="left:1471px;top:551px" width="17" height="17" viewBox="0 0 16 16"><path d="M2.300 5 A7 7 0 1 1 1.500 9.500 M0.500 3 L2.300 5.800 L5 4" stroke="#3c3c3c" fill="none" stroke-width="1.1"/><path d="M8.500 4 V8.500 L11.500 11" stroke="#3c3c3c" fill="none" stroke-width="1.1"/></svg>
<svg style="left:1471px;top:587px" width="17" height="17" viewBox="0 0 16 16"><circle cx="8" cy="8" r="7" stroke="#3c3c3c" fill="none" stroke-width="1.1"/><path d="M5.500 6.200 Q5.500 3.500 8 3.500 Q10.500 3.500 10.500 6 Q10.500 7.500 8 8.500 V10" stroke="#3c3c3c" fill="none" stroke-width="1.1"/><circle cx="8" cy="12.200" r="0.800" fill="#3c3c3c"/></svg>
<div class="abs" style="left:1470px;top:619px;width:26px;height:1px;background:#cfcfcf"></div>
<div class="abs" style="left:1473px;top:643px;width:3px;height:3px;border-radius:50%;border:1px solid #888"></div><div class="abs" style="left:1478px;top:643px;width:3px;height:3px;border-radius:50%;border:1px solid #888"></div><div class="abs" style="left:1483px;top:643px;width:3px;height:3px;border-radius:50%;border:1px solid #888"></div>

<!-- E:rstripc -->
<!-- S:bottom -->
<svg style="left:207px;top:942px" width="17" height="15" viewBox="0 0 17 15"><path d="M1.500 0.500 H15 a1 1 0 0 1 1 1 V10.500 a1 1 0 0 1 -1 1 H5 L1.500 14.500 L1.500 11.500 a1 1 0 0 1 -1 -1 V1.500 a1 1 0 0 1 1 -1z M4 4 H13 M4 7.500 H13" fill="none" stroke="#444" stroke-width="1"/></svg>
<div class="t" style="left:232px;top:942px;font-size:13.300px;color:#222">单击此处添加备注</div>
<div class="t" style="left:10px;top:976px;font-size:12px;color:#555;word-spacing:1px;letter-spacing:.1px">幻灯片 1 / 2</div><div class="vsep" style="left:88px;top:972px;height:23px"></div>
<div class="t" style="left:99px;top:976px;font-size:12px;color:#555">Office 主题</div><div class="vsep" style="left:172px;top:972px;height:23px"></div>
<svg style="left:1018px;top:976px" width="16" height="14" viewBox="0 0 16 14"><path d="M0 1.500 H15 M0 4.500 H15 M0 7.500 H15 M0 10.500 H8" stroke="#444" fill="none"/><path d="M10 11 H16 L13 14z" fill="#444"/></svg><div class="dd" style="left:1037px;top:983px"></div>
<div class="abs" style="left:1048px;top:971px;width:24px;height:24px;background:#bdbdbd;border-radius:4px"></div><svg style="left:1052px;top:976px" width="14" height="14" viewBox="0 0 14 14"><rect x="0.500" y="0.500" width="13" height="13" fill="none" stroke="#333"/><path d="M4.500 0.500 V13.500" stroke="#333"/></svg>

<!-- E:bottom -->
<!-- S:watermark -->
<div class="abs" style="left:1059px;top:897px;width:434px;height:103px;background:#000"></div>
<div class="abs" style="left:1059px;top:897px;width:173px;height:106px;background:#0b6dff;border-radius:24px"></div>
<svg style="left:1059px;top:897px" width="434" height="103" viewBox="0 0 434 103"><text x="9" y="79" font-family="Liberation Sans, sans-serif" font-weight="bold" font-size="85" fill="#fff" textLength="154" lengthAdjust="spacingAndGlyphs">TAG</text><text x="190" y="47" font-family="Noto Sans CJK SC, sans-serif" font-weight="bold" font-size="45" fill="#ff1414" textLength="225" lengthAdjust="spacingAndGlyphs">电脑技术网</text><text x="188" y="92.500" font-family="Liberation Serif, serif" font-size="36" fill="#1c6fe6" stroke="#1c6fe6" stroke-width="0.600" textLength="231" lengthAdjust="spacingAndGlyphs">www.tagxp.com</text></svg>

<!-- E:watermark -->
<!-- S:arrow -->
<svg style="left:280px;top:78px;z-index:6" width="110" height="104" viewBox="280 78 110 104"><defs><filter id="ash" x="-10%" y="-10%" width="130%" height="130%"><feGaussianBlur stdDeviation="0.8"/></filter></defs><path d="M381.300 85.700 L359.500 100.500 L363.200 103 L293.700 173 L295.800 175.200 L366.500 107.600 L369.500 109z" fill="#444" opacity=".55" filter="url(#ash)"/><path d="M380.300 84.500 L358 99 L362 101.700 L292.600 171.800 L294.600 174 L365.300 106.400 L368.300 107.800z" fill="#f50a0a"/></svg>

<!-- E:arrow -->
</body>
</html>
